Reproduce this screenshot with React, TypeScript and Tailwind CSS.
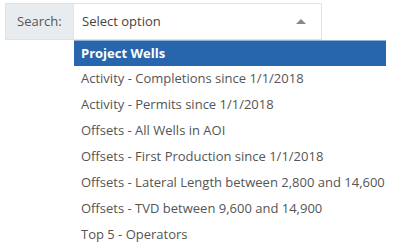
export default function App() {
  const items = [
    "Activity - Completions since 1/1/2018",
    "Activity - Permits since 1/1/2018",
    "Offsets - All Wells in AOI",
    "Offsets - First Production since 1/1/2018",
    "Offsets - Lateral Length between 2,800 and 14,600",
    "Offsets - TVD between 9,600 and 14,900",
    "Top 5 - Operators",
  ];
  return (
    <div
      className="w-[398px] h-[251px] bg-white overflow-hidden pt-[3px] pl-[5px]"
      style={{ fontFamily: '"Open Sans", sans-serif' }}
    >
      <div className="flex h-[37px]">
        <div className="w-[68px] bg-[#e9ecef] border border-[#dee2e6] border-r-0 flex items-center pl-[11px] text-[13px] text-[#555]">
          Search:
        </div>
        <div className="w-[249px] border border-[#e3e3e3] flex items-center justify-between pl-[8px] pr-[15px] text-[13px] text-[#444]">
          <span>Select option</span>
          <span className="w-0 h-0 border-l-[5px] border-r-[5px] border-b-[5px] border-l-transparent border-r-transparent border-b-[#888] mb-[1px]" />
        </div>
      </div>
      <div className="ml-[69px] w-[312px] flex flex-col">
        <div className="h-[26px] bg-[#2766ad] border-t border-[#8fb3d9] flex items-center pl-[7px] text-[13px] font-bold text-white whitespace-nowrap">
          Project Wells
        </div>
        {items.map((t) => (
          <div key={t} className="h-[26px] flex items-center pl-[7px] text-[13px] text-[#555] whitespace-nowrap">
            {t}
          </div>
        ))}
      </div>
    </div>
  );
}
